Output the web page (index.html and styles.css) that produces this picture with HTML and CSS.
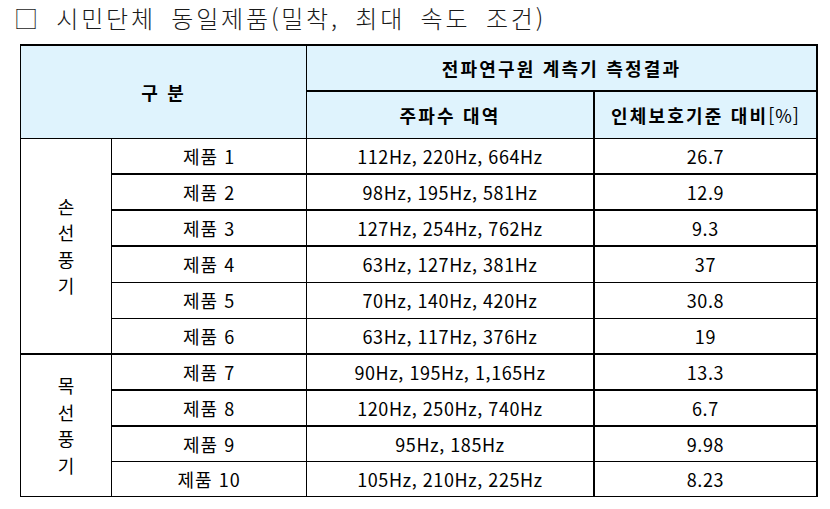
FILE: index.html
```html
<!DOCTYPE html>
<html lang="ko">
<head>
<meta charset="utf-8">
<link rel="stylesheet" href="styles.css">
</head>
<body>
<h1 class="title">□ 시민단체 동일제품(밀착, 최대 속도 조건)</h1>
<table class="result">
  <colgroup>
    <col class="c1"><col class="c2"><col class="c3"><col class="c4">
  </colgroup>
  <thead>
    <tr class="hrow first">
      <th class="cat" rowspan="2" colspan="2">구 분</th>
      <th class="grp" colspan="2">전파연구원 계측기 측정결과</th>
    </tr>
    <tr class="hrow">
      <th class="freq">주파수 대역</th>
      <th class="ratio">인체보호기준 대비<span class="unit">[%]</span></th>
    </tr>
  </thead>
  <tbody>
    <tr class="row thick">
      <td class="type" rowspan="6"><span>손</span><span>선</span><span>풍</span><span>기</span></td>
      <td class="name">제품 1</td><td class="freq">112Hz, 220Hz, 664Hz</td><td class="ratio">26.7</td>
    </tr>
    <tr class="row thick"><td class="name">제품 2</td><td class="freq">98Hz, 195Hz, 581Hz</td><td class="ratio">12.9</td></tr>
    <tr class="row thick"><td class="name">제품 3</td><td class="freq">127Hz, 254Hz, 762Hz</td><td class="ratio">9.3</td></tr>
    <tr class="row"><td class="name">제품 4</td><td class="freq">63Hz, 127Hz, 381Hz</td><td class="ratio">37</td></tr>
    <tr class="row"><td class="name">제품 5</td><td class="freq">70Hz, 140Hz, 420Hz</td><td class="ratio">30.8</td></tr>
    <tr class="row thick"><td class="name">제품 6</td><td class="freq">63Hz, 117Hz, 376Hz</td><td class="ratio">19</td></tr>
    <tr class="row thick">
      <td class="type" rowspan="4"><span>목</span><span>선</span><span>풍</span><span>기</span></td>
      <td class="name">제품 7</td><td class="freq">90Hz, 195Hz, 1,165Hz</td><td class="ratio">13.3</td>
    </tr>
    <tr class="row thick"><td class="name">제품 8</td><td class="freq">120Hz, 250Hz, 740Hz</td><td class="ratio">6.7</td></tr>
    <tr class="row short"><td class="name">제품 9</td><td class="freq">95Hz, 185Hz</td><td class="ratio">9.98</td></tr>
    <tr class="row short"><td class="name">제품 10</td><td class="freq">105Hz, 210Hz, 225Hz</td><td class="ratio">8.23</td></tr>
  </tbody>
</table>
</body>
</html>
```
FILE: styles.css
```css
html, body {
  margin: 0;
  padding: 0;
  background: #ffffff;
}
body {
  font-family: "Noto Sans CJK KR", "Noto Sans", sans-serif;
  color: #000;
}
.title {
  margin: 0;
  padding: 3px 0 0 14px;
  height: 44px;
  box-sizing: border-box;
  font-size: 24px;
  line-height: 30px;
  font-weight: 300;
  color: #1a1a1a;
  letter-spacing: 2.8px;
  word-spacing: 6px;
  white-space: nowrap;
}
.result {
  margin-left: 20px;
  border-collapse: collapse;
  table-layout: fixed;
  width: 798px;
  font-size: 18px;
  letter-spacing: 0.55px;
  border-top: 2px solid #000;
  border-left: 1px solid #000;
  border-right: 2px solid #000;
  border-bottom: 1px solid #000;
}
.c1 { width: 91px; }
.c2 { width: 195px; }
.c3 { width: 287px; }
.c4 { width: 223px; }
.result th, .result td {
  border: 1px solid #000;
  padding: 0;
  text-align: center;
  vertical-align: middle;
  line-height: 22px;
}
.result td.name { letter-spacing: 1px; }
.result th {
  background: #dff3fd;
  font-weight: 700;
  letter-spacing: 2.2px;
}
.hrow { height: 47px; }
.hrow.first { height: 46px; }
.result th.grp { border-bottom: 2px solid #000; }
.result th.ratio, .result td.ratio { border-left: 2px solid #000; }
.unit { font-weight: 400; letter-spacing: 1px; }
.row { height: 36px; }
.row.short { height: 35px; }
.row.thick td.name, .row.thick td.freq, .row.thick td.ratio { border-bottom: 2px solid #000; }
.result td.type {
  border-bottom: 2px solid #000;
  line-height: 26.5px;
  letter-spacing: 0;
}
.result td.type span { display: block; }
.result tbody tr:last-child td { border-bottom: 1px solid #000; }
.result tbody tr:nth-child(7) td.type { border-bottom: 1px solid #000; }
```
